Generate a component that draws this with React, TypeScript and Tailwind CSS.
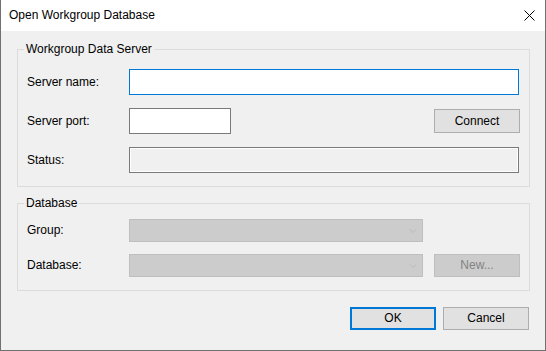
import { ChevronDown } from 'lucide-react';

const font = "font-['Segoe_UI','Liberation_Sans',Arial,sans-serif]";

function Row({ label, children }: { label: string; children: React.ReactNode }) {
  return (
    <div className="flex items-center">
      <span className="w-[102px] shrink-0">{label}</span>
      {children}
    </div>
  );
}

function Combo() {
  return (
    <div className="w-[294px] h-[23px] bg-[#cccccc] border border-[#bfbfbf] flex items-center justify-end pr-[3px]">
      <ChevronDown size={12} strokeWidth={1} className="text-[#a6a6a6]" />
    </div>
  );
}

export default function App() {
  return (
    <div className={`${font} text-[12px] leading-[15px] text-black w-[546px] h-[351px] flex flex-col bg-[#f0f0f0] border-x border-b border-[#707070]`}>
      {/* title bar */}
      <div className="h-[31px] shrink-0 bg-white flex items-center justify-between pl-[8px] pr-[10px]">
        <span>Open Workgroup Database</span>
        <svg width="11" height="11" viewBox="0 0 11 11" className="text-black">
          <path d="M0.5 0.5 L10.5 10.5 M10.5 0.5 L0.5 10.5" stroke="currentColor" strokeWidth="1" />
        </svg>
      </div>

      <div className="flex-1 flex flex-col pl-[16px] pr-[16px] pt-[11px]">
        <fieldset className="w-[513px] border border-[#dcdcdc] px-[9px] pb-[13px]">
          <legend className="-ml-[3px] px-[2px]">Workgroup Data Server</legend>
          <div className="flex flex-col gap-[13px] pt-[12px]">
            <Row label="Server name:">
              <div className="w-[390px] h-[26px] bg-white border border-[#0078d7]" />
            </Row>
            <Row label="Server port:">
              <div className="w-[102px] h-[26px] bg-white border border-[#7a7a7a]" />
              <button className="ml-auto w-[86px] h-[24px] bg-[#e1e1e1] border border-[#adadad] text-center">
                Connect
              </button>
            </Row>
            <Row label="Status:">
              <div className="w-[390px] h-[26px] bg-[#f0f0f0] border border-[#7a7a7a] shadow-[inset_0_0_0_1px_#ffffff]" />
            </Row>
          </div>
        </fieldset>

        <fieldset className="mt-[9px] w-[513px] border border-[#dcdcdc] px-[9px] pb-[13px]">
          <legend className="-ml-[3px] px-[2px]">Database</legend>
          <div className="flex flex-col gap-[12px] pt-[8px]">
            <Row label="Group:">
              <Combo />
            </Row>
            <Row label="Database:">
              <Combo />
              <button className="ml-auto w-[86px] h-[23px] bg-[#cccccc] border border-[#bfbfbf] text-[#838383] text-center">
                New...
              </button>
            </Row>
          </div>
        </fieldset>

        <div className="mt-[16px] flex justify-end gap-[7px]">
          <button className="w-[86px] h-[23px] bg-[#e1e1e1] border-2 border-[#0078d7] text-center">OK</button>
          <button className="w-[86px] h-[23px] bg-[#e1e1e1] border border-[#adadad] text-center">Cancel</button>
        </div>
      </div>
    </div>
  );
}
